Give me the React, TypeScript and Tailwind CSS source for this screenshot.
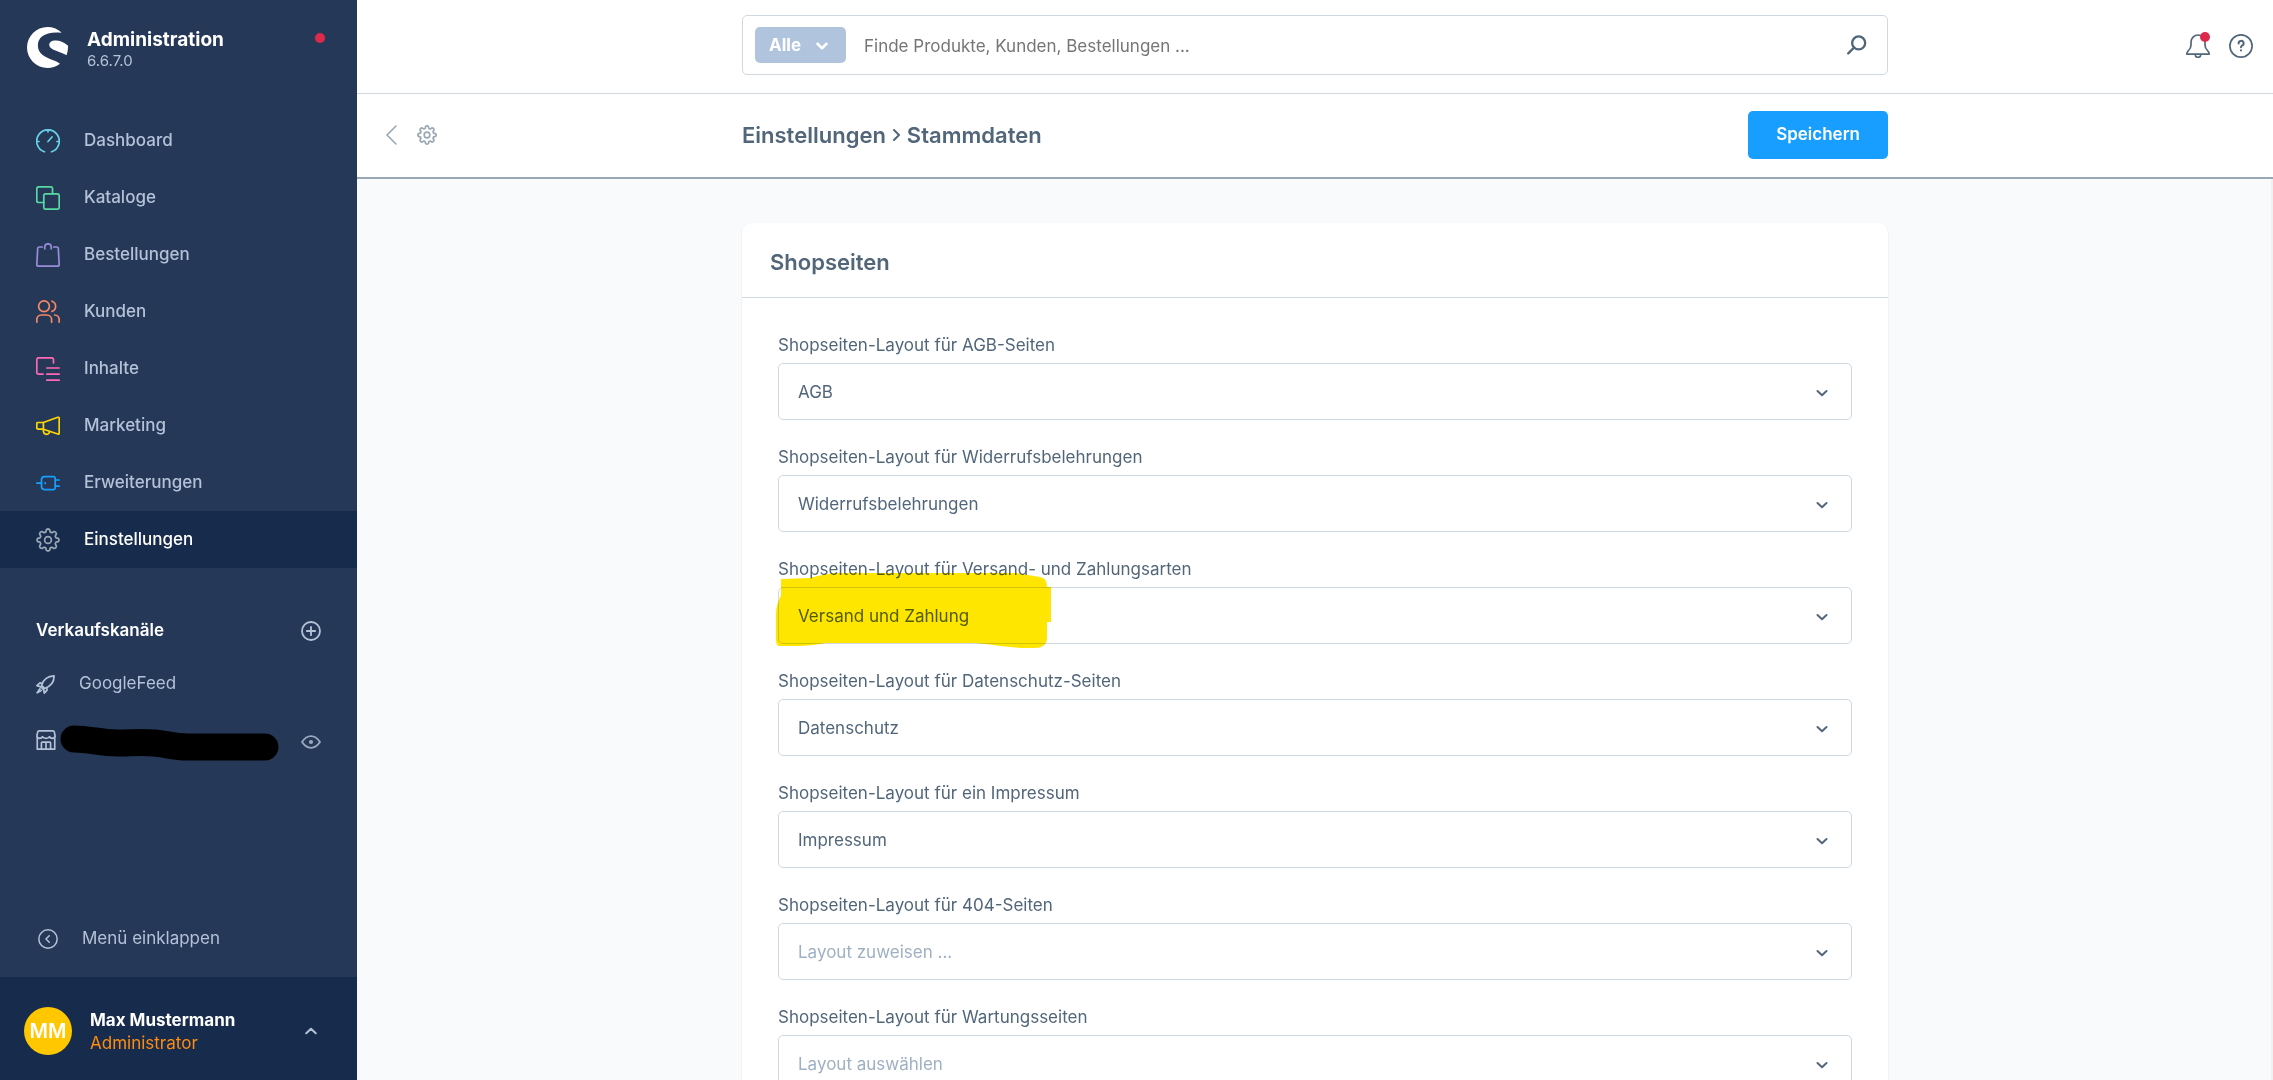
import type { ReactNode } from 'react';
import { SiShopware } from 'react-icons/si';

interface IconProps {
  children: ReactNode;
  className?: string;
  strokeWidth?: number;
}

function Icon({ children, className = 'size-6', strokeWidth = 1.7 }: IconProps) {
  return (
    <svg
      viewBox="0 0 24 24"
      fill="none"
      stroke="currentColor"
      strokeWidth={strokeWidth}
      strokeLinecap="round"
      strokeLinejoin="round"
      className={`shrink-0 ${className}`}
      aria-hidden="true"
    >
      {children}
    </svg>
  );
}

const gearShape = (
  <>
    <path d="M10.3 1.8Q12 .2 13.7 1.8L14.2 4.1L15.9 4.8L17.9 3.5Q20.2 3.6 20.4 6L19.2 8.1L19.9 9.8L22.2 10.3Q23.8 12 22.2 13.7L19.9 14.2L19.2 15.9L20.4 18Q20.2 20.4 17.9 20.5L15.9 19.2L14.2 19.9L13.7 22.2Q12 23.8 10.3 22.2L9.8 19.9L8.1 19.2L6.1 20.5Q3.8 20.4 3.6 18L4.8 15.9L4.1 14.2L1.8 13.7Q.2 12 1.8 10.3L4.1 9.8L4.8 8.1L3.6 6Q3.8 3.6 6.1 3.5L8.1 4.8L9.8 4.1Z" />
    <circle cx="12" cy="12" r="3.4" />
  </>
);

const navItems = [
  {
    label: 'Dashboard',
    color: 'text-[#67d3e8]',
    icon: (
      <>
        <path d="M8.4 22.8A11.3 11.3 0 1 1 15.6 22.8" />
        <path d="M12 .8V3M.8 12.5H3M21 12.5H23.2M12 12.5L16 8" />
      </>
    ),
  },
  {
    label: 'Kataloge',
    color: 'text-[#57d9a3]',
    icon: (
      <>
        <path d="M7.8 16.5H2.6A1.8 1.8 0 0 1 .8 14.7V2.6A1.8 1.8 0 0 1 2.6 .8H14.7A1.8 1.8 0 0 1 16.5 2.6V7.8" />
        <rect x="7.8" y="7.8" width="15.4" height="15.4" rx="1.8" />
      </>
    ),
  },
  {
    label: 'Bestellungen',
    color: 'text-[#998dd9]',
    icon: (
      <>
        <path d="M6.3 4H3.2A1.5 1.5 0 0 0 1.7 5.4L.8 21.6A1.6 1.6 0 0 0 2.4 23.2H21.6A1.6 1.6 0 0 0 23.2 21.6L22.3 5.4A1.5 1.5 0 0 0 20.8 4H17.7" />
        <path d="M8.8 5.8V4A3.2 3.2 0 0 1 15.2 4V5.8" />
      </>
    ),
  },
  {
    label: 'Kunden',
    color: 'text-[#f88962]',
    icon: (
      <>
        <circle cx="8" cy="6.3" r="5.4" />
        <path d="M.8 22.2V19.5A4.6 4.6 0 0 1 5.4 15H11A4.6 4.6 0 0 1 15.6 19.5V22.2" />
        <path d="M16 1.2A5.4 5.4 0 0 1 16 11.4M18.6 15A4.8 4.8 0 0 1 23.2 19.7V22.2" />
      </>
    ),
  },
  {
    label: 'Inhalte',
    color: 'text-[#ff68b4]',
    icon: (
      <>
        <path d="M7 17.2H2.6A1.8 1.8 0 0 1 .8 15.4V2.6A1.8 1.8 0 0 1 2.6 .8H15.7A1.8 1.8 0 0 1 17.5 2.6V6" />
        <path d="M10.8 11H23.2M10.8 17.2H23.2M10.8 23.2H23.2" />
      </>
    ),
  },
  {
    label: 'Marketing',
    color: 'text-[#ffd700]',
    icon: (
      <>
        <path d="M7.4 8.5L21.8 3.3Q23.2 3 23.2 4.4V19Q23.2 20.4 21.8 20L7.4 15.2Z" />
        <path d="M7.4 8.5H2A1.2 1.2 0 0 0 .8 9.7V14A1.2 1.2 0 0 0 2 15.2H7.4M7.4 15.4V17.4A3.2 3.2 0 0 0 13 19.2L13.6 17.5" />
      </>
    ),
  },
  {
    label: 'Erweiterungen',
    color: 'text-[#189eff]',
    icon: (
      <>
        <path d="M8.5 5.6H17.4A1.8 1.8 0 0 1 19.2 7.4V16.8A1.8 1.8 0 0 1 17.4 18.6H8.5A3 3 0 0 1 5.5 15.6V8.6A3 3 0 0 1 8.5 5.6Z" />
        <path d="M.8 12.1H5.5M19.2 9H23.2M19.2 15.2H23.2M9.2 11.8V12.4" />
      </>
    ),
  },
  {
    label: 'Einstellungen',
    color: 'text-[#9aa8b5]',
    active: true,
    icon: gearShape,
  },
];

const fields = [
  { id: 'agb', label: 'Shopseiten-Layout für AGB-Seiten', value: 'AGB' },
  { id: 'revocation', label: 'Shopseiten-Layout für Widerrufsbelehrungen', value: 'Widerrufsbelehrungen' },
  { id: 'shipping', label: 'Shopseiten-Layout für Versand- und Zahlungsarten', value: 'Versand und Zahlung', marked: true },
  { id: 'privacy', label: 'Shopseiten-Layout für Datenschutz-Seiten', value: 'Datenschutz' },
  { id: 'imprint', label: 'Shopseiten-Layout für ein Impressum', value: 'Impressum' },
  { id: 'not-found', label: 'Shopseiten-Layout für 404-Seiten', placeholder: 'Layout zuweisen ...' },
  { id: 'maintenance', label: 'Shopseiten-Layout für Wartungsseiten', placeholder: 'Layout auswählen' },
];

function Sidebar() {
  return (
    <aside className="flex w-[357px] shrink-0 flex-col bg-[#253858] text-[#b3c2d6]">
      <div className="flex h-28 items-start pt-[27px] pr-8 pl-[27px]">
        <SiShopware className="size-[41px] shrink-0 text-white" />
        <div className="ml-[19px] flex-1 pt-px">
          <p className="text-[19px] leading-6 font-bold text-white">Administration</p>
          <p className="text-[15px] leading-[18px]">6.6.7.0</p>
        </div>
        <span className="mt-1.5 size-2.5 rounded-full bg-[#de294c]" />
      </div>

      <nav>
        {navItems.map(item => (
          <a
            key={item.label}
            href="#"
            className={`flex h-[57px] items-center gap-6 pl-9 text-[17px] font-medium ${
              item.active ? 'bg-[#172b4d] text-white' : ''
            }`}
          >
            <Icon className={`size-6 ${item.color}`}>{item.icon}</Icon>
            {item.label}
          </a>
        ))}
      </nav>

      <section className="mt-[34px] pr-9 pl-9">
        <div className="flex h-[57px] items-center justify-between">
          <h2 className="text-[17px] font-semibold text-white">Verkaufskanäle</h2>
          <button aria-label="Verkaufskanal hinzufügen">
            <Icon className="size-5" strokeWidth={2.2}>
              <circle cx="12" cy="12" r="10.8" />
              <path d="M12 7V17M7 12H17" />
            </Icon>
          </button>
        </div>
        <a href="#" className="flex h-[50px] items-center gap-6 text-[17px]">
          <Icon className="size-[19px]" strokeWidth={2.2}>
            <path d="M7 13C9 7 14 1.5 22.8 1.2C23 10 17 15 11 17Z" />
            <path d="M8 10.5L5 10L1.2 13.5L6 15M13.5 16L14 19L10.5 22.8L9.5 18" />
            <path d="M6 15L9.5 18M5 17.5L1.5 22.5L6.5 19.5" />
          </Icon>
          GoogleFeed
        </a>
        <div className="relative flex h-[57px] items-center justify-between pt-1">
          <Icon className="size-5" strokeWidth={2}>
            <path d="M1 7.5L2 2.5A1.8 1.8 0 0 1 3.7 1H20.3A1.8 1.8 0 0 1 22 2.5L23 7.5Q22.5 10 19.5 10Q17 10 16.2 8Q15 10 12 10Q9 10 7.8 8Q7 10 4.5 10Q1.5 10 1 7.5Z" />
            <path d="M1.5 10V23H22.5V10M6.5 23V15.5A1 1 0 0 1 7.5 14.5H16.5A1 1 0 0 1 17.5 15.5V23M12 14.5V23" />
          </Icon>
          <button aria-label="Storefront öffnen" className="pt-1 text-[#9aaabf]">
            <Icon className="size-5" strokeWidth={2.2}>
              <path d="M1.2 12Q6 5 12 5Q18 5 22.8 12Q18 19 12 19Q6 19 1.2 12Z" />
              <circle cx="12" cy="12" r="1.4" fill="currentColor" />
            </Icon>
          </button>
          <svg
            viewBox="0 0 220 40"
            className="absolute top-4 left-6 h-10 w-[220px]"
            fill="none"
            stroke="#000"
            strokeWidth="27"
            strokeLinecap="round"
            strokeLinejoin="round"
            aria-hidden="true"
          >
            <path d="M14 14C30 14 40 18 58 18C72 18 82 17 94 18C106 19 114 22 128 22H205" />
          </svg>
        </div>
      </section>

      <button className="mt-auto flex h-[76px] items-center gap-6 pl-[38px] text-[17px]">
        <Icon className="size-5" strokeWidth={1.8}>
          <circle cx="12" cy="12" r="11" />
          <path d="M13.5 8L9.5 12L13.5 16" />
        </Icon>
        Menü einklappen
      </button>

      <button className="flex h-[103px] items-center bg-[#172b4d] pt-1 pr-10 pl-6 text-left">
        <span className="flex size-12 items-center justify-center rounded-full bg-[#ffc700] text-[20px] font-semibold text-white">
          MM
        </span>
        <span className="ml-[18px] flex-1 pt-0.5 text-[17px] leading-[23px]">
          <span className="block font-bold text-white">Max Mustermann</span>
          <span className="block text-[#ff8c0e]">Administrator</span>
        </span>
        <Icon className="size-3" strokeWidth={4}>
          <path d="M2.5 16.5L12 7.5L21.5 16.5" />
        </Icon>
      </button>
    </aside>
  );
}

function SearchBar() {
  return (
    <header className="grid grid-cols-[1fr_minmax(0,1146px)_1fr] items-center border-b border-[#d1d9e0] pt-[15px] pb-[18px]">
      <div className="col-start-2 flex h-[60px] items-center rounded-[5px] border border-[#d1d9e0] pr-5 pl-3">
        <button className="flex h-9 w-[91px] shrink-0 items-center justify-between rounded-[5px] bg-[#b0c4de] pt-0.5 pr-[18px] pl-3.5 text-[17px] font-bold text-white">
          Alle
          <Icon className="size-3" strokeWidth={5}>
            <path d="M3 7.5L12 16.5L21 7.5" />
          </Icon>
        </button>
        <input
          type="text"
          aria-label="Suche"
          placeholder="Finde Produkte, Kunden, Bestellungen ..."
          className="ml-[18px] flex-1 bg-transparent pt-1 text-[17px] outline-none placeholder:text-[#757575]"
        />
        <button aria-label="Suchen">
          <Icon className="size-5" strokeWidth={2.8}>
            <circle cx="14" cy="9.5" r="7.8" />
            <path d="M8.5 15L1.5 22" />
          </Icon>
        </button>
      </div>
      <div className="flex items-center justify-end gap-[19px] pt-0.5 pr-5">
        <button aria-label="Benachrichtigungen" className="relative">
          <Icon>
            <path d="M5 8A7 7 0 0 1 19 8V11Q19 14 21.5 16.5Q23.2 18.2 23.2 20.2H.8Q.8 18.2 2.5 16.5Q5 14 5 11Z" />
            <path d="M9.2 20.5A2.8 2.8 0 0 0 14.8 20.5" />
          </Icon>
          <span className="absolute -top-0.5 right-0 size-2.5 rounded-full bg-[#de294c]" />
        </button>
        <button aria-label="Hilfe">
          <Icon>
            <circle cx="12" cy="12" r="11.1" />
            <path strokeWidth="2" d="M9.6 9.4A2.5 2.5 0 1 1 12.7 11.8Q12 12.1 12 13.3M12 16.2V16.4" />
          </Icon>
        </button>
      </div>
    </header>
  );
}

function PageBar() {
  return (
    <div className="grid grid-cols-[1fr_minmax(0,1146px)_1fr] items-center border-b-2 border-[#9aa8b5] pt-[17px] pb-[18px]">
      <div className="flex items-center gap-[19px] pl-7 text-[#9aa8b5]">
        <a href="#" aria-label="Zurück">
          <svg viewBox="0 0 13 20" fill="none" stroke="currentColor" strokeWidth="1.6" strokeLinecap="round" strokeLinejoin="round" className="h-5 w-[13px]">
            <path d="M11 1L2 10L11 19" />
          </svg>
        </a>
        <a href="#" aria-label="Einstellungen">
          <Icon className="size-5" strokeWidth={2}>{gearShape}</Icon>
        </a>
      </div>
      <div className="flex items-center justify-between">
        <h1 className="flex items-center gap-[7px] text-[22px] font-semibold">
          Einstellungen
          <svg viewBox="0 0 7 12" fill="none" stroke="currentColor" strokeWidth="2" strokeLinecap="round" strokeLinejoin="round" className="h-3 w-[7px]" aria-hidden="true">
            <path d="M1 1L6 6L1 11" />
          </svg>
          Stammdaten
        </h1>
        <button className="h-12 rounded-[5px] bg-[#189eff] px-7 text-[17px] font-semibold text-white">
          Speichern
        </button>
      </div>
    </div>
  );
}

export default function App() {
  return (
    <div className="flex h-screen overflow-hidden bg-white font-['Inter',sans-serif] text-[#52667a]">
      <Sidebar />
      <div className="flex min-w-0 flex-1 flex-col">
        <SearchBar />
        <PageBar />
        <main className="flex-1 overflow-y-auto bg-[#f9fafb] pt-11 shadow-[inset_-2px_0_0_#f1f1f1] [scrollbar-width:none]">
          <section className="mx-auto max-w-[1146px] rounded-[10px] bg-white shadow-[0_1px_2px_rgba(0,0,0,0.12)]">
            <h2 className="border-b border-[#d1d9e0] px-7 pt-6 pb-5 text-[22px] leading-[30px] font-semibold">
              Shopseiten
            </h2>
            <div className="flex flex-col gap-[25px] px-9 py-[35px]">
              {fields.map(field => (
                <div key={field.id} className="flex flex-col gap-1.5">
                  <label htmlFor={field.id} className="text-[17px] leading-6">
                    {field.label}
                  </label>
                  <div className="relative">
                    <select
                      id={field.id}
                      className={`block h-[57px] w-full appearance-none rounded-[5px] border border-[#d1d9e0] bg-white px-[19px] pt-0.5 text-[17px] outline-none ${
                        field.value ? '' : 'text-[#9fb0c3]'
                      }`}
                    >
                      <option>{field.value ?? field.placeholder}</option>
                    </select>
                    <Icon className="pointer-events-none absolute top-6 right-6 size-3" strokeWidth={4}>
                      <path d="M3 8L12 16.5L21 8" />
                    </Icon>
                    {field.marked && (
                      <svg
                        viewBox="0 0 276 78"
                        className="pointer-events-none absolute -top-4 -left-0.5 h-[78px] w-[276px] mix-blend-multiply"
                        fill="#ffe600"
                        aria-hidden="true"
                      >
                        <path d="M5 8L34 7Q52 2 62 2H240L264 6Q271 7 271 16H275V51H271V67Q271 77 258 77H244L224 75Q206 72 196 72H50Q34 75 22 75H3Q0 74 0 69V42Q0 35 5 24Z" />
                      </svg>
                    )}
                  </div>
                </div>
              ))}
            </div>
          </section>
        </main>
      </div>
    </div>
  );
}
